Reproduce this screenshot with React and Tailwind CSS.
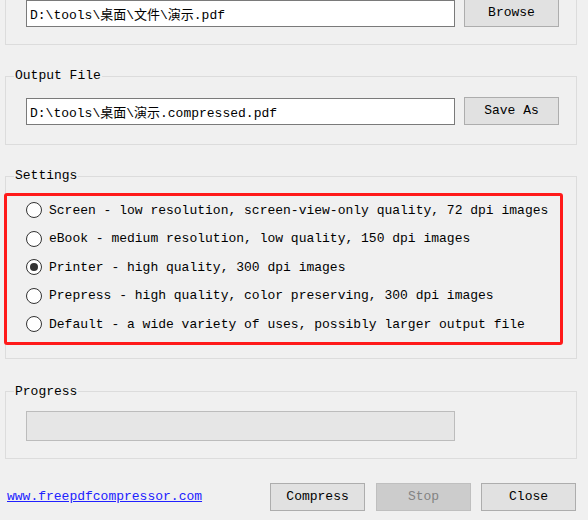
import { useState } from "react";

const presets = [
  { id: "screen", label: "Screen - low resolution, screen-view-only quality, 72 dpi images" },
  { id: "ebook", label: "eBook - medium resolution, low quality, 150 dpi images" },
  { id: "printer", label: "Printer - high quality, 300 dpi images" },
  { id: "prepress", label: "Prepress - high quality, color preserving, 300 dpi images" },
  { id: "default", label: "Default - a wide variety of uses, possibly larger output file" },
];

const Button = ({ children, disabled, className = "" }) => (
  <button
    disabled={disabled}
    className={`h-[28px] w-[95px] border ${
      disabled
        ? "border-[#bfbfbf] bg-[#cccccc] text-[#838383]"
        : "border-[#adadad] bg-[#e1e1e1] text-black"
    } ${className}`}
  >
    {children}
  </button>
);

const Group = ({ title, className = "", children }) => (
  <fieldset className={`w-[572px] border border-[#dcdcdc] px-0 ${className}`}>
    {title && <legend className="ml-[8px] px-[1px] leading-[16px]">{title}</legend>}
    {children}
  </fieldset>
);

const PathField = ({ value }) => (
  <input
    readOnly
    value={value}
    className="h-[27px] w-[429px] border border-[#7a7a7a] bg-white px-[3px] text-black outline-none"
  />
);

export default function App() {
  const [preset, setPreset] = useState("printer");

  return (
    <div
      className="h-[520px] w-[588px] overflow-hidden bg-[#f0f0f0] pl-[5px] text-[13px] text-black"
      style={{ fontFamily: "'Liberation Mono', 'Noto Sans CJK SC', monospace" }}
    >
      {/* Input file (group title scrolled off the top) */}
      <Group className="-mt-[15px] pb-[17px]">
        <div className="flex items-center pl-[20px] pt-[13px]">
          <PathField value="D:\tools\桌面\文件\演示.pdf" />
          <Button className="ml-[9px] h-[27px]">Browse</Button>
        </div>
      </Group>

      {/* Output file */}
      <Group title="Output File" className="mt-[23px] pb-[19px]">
        <div className="flex items-center pl-[20px] pt-[13px]">
          <PathField value="D:\tools\桌面\演示.compressed.pdf" />
          <Button className="ml-[9px] h-[27px]">Save As</Button>
        </div>
      </Group>

      {/* Settings */}
      <Group title="Settings" className="mt-[23px] pb-[13px]">
        <div className="-ml-[2px] mt-[9px] w-[559px] rounded-[3px] border-[3px] border-[#ff1a1a] pb-[3px] pl-[19px]">
          {presets.map((p) => (
            <label
              key={p.id}
              className="flex h-[28.5px] cursor-default items-center"
              onClick={() => setPreset(p.id)}
            >
              <span className="flex h-[16px] w-[16px] items-center justify-center rounded-full border border-[#333333] bg-white">
                {preset === p.id && <span className="h-[8px] w-[8px] rounded-full bg-[#333333]" />}
              </span>
              <span className="ml-[7px] whitespace-pre">{p.label}</span>
            </label>
          ))}
        </div>
      </Group>

      {/* Progress */}
      <Group title="Progress" className="mt-[25px] pb-[17px]">
        <div className="pl-[20px] pt-[11px]">
          <div className="h-[30px] w-[429px] border border-[#bcbcbc] bg-[#e6e6e6]" />
        </div>
      </Group>

      {/* Footer */}
      <div className="mt-[24px] flex items-center">
        <a href="#" className="ml-[2px] text-[#2020ff] underline">
          www.freepdfcompressor.com
        </a>
        <Button className="ml-[68px]">Compress</Button>
        <Button className="ml-[11px]" disabled>
          Stop
        </Button>
        <Button className="ml-[10px]">Close</Button>
      </div>
    </div>
  );
}
